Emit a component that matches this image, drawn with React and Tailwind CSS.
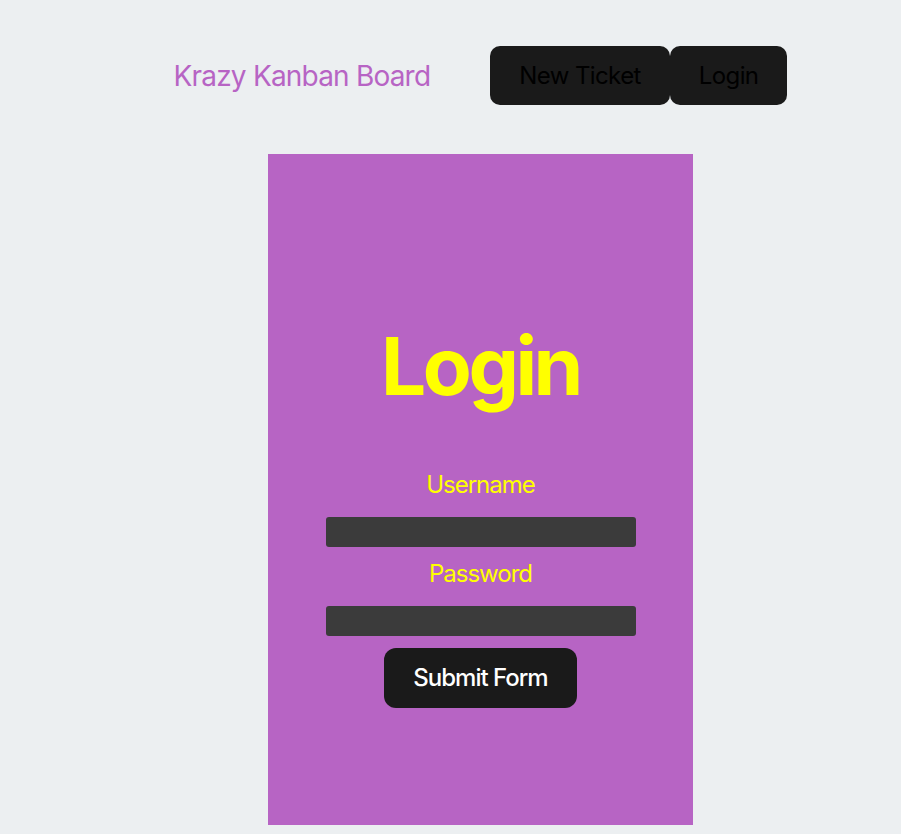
const NavButton = ({ children }) => (
  <button className="bg-[#1a1a1a] text-black text-[24px] leading-[30px] tracking-[-0.6px] px-[29px] py-[14.5px] rounded-[10px]">
    {children}
  </button>
)

const Field = ({ label, top }) => (
  <div className={`flex flex-col items-center ${top}`}>
    <label className="text-[#ffff00] text-[24px] leading-[33px] tracking-[-1px]">{label}</label>
    <input className="mt-[16px] w-[310px] h-[30px] bg-[#3b3b3b] rounded-[3px] outline-none" />
  </div>
)

export default function App() {
  return (
    <div
      className="min-h-[834px] bg-[#eceff1] pl-[60px] flex flex-col items-center"
      style={{ fontFamily: 'Inter, "Noto Sans", sans-serif' }}
    >
      <nav className="mt-[46px] flex items-center">
        <h2 className="text-[#b764c4] text-[28px] leading-[30px] tracking-[-0.8px] mr-[60px]">Krazy Kanban Board</h2>
        <div className="flex">
          <NavButton>New Ticket</NavButton>
          <NavButton>Login</NavButton>
        </div>
      </nav>

      <form className="mt-[49px] w-[425px] h-[671px] bg-[#b764c4] flex flex-col items-center pt-[164px]">
        <h1 className="text-[#ffff00] text-[80px] leading-[96px] font-bold tracking-[-3.5px]">Login</h1>
        <Field label="Username" top="mt-[54px]" />
        <Field label="Password" top="mt-[10px]" />
        <button
          type="button"
          className="mt-[12px] w-[193px] h-[60px] bg-[#1a1a1a] text-white text-[24px] font-medium tracking-[-1px] rounded-[12px]"
        >
          Submit Form
        </button>
      </form>
    </div>
  )
}
